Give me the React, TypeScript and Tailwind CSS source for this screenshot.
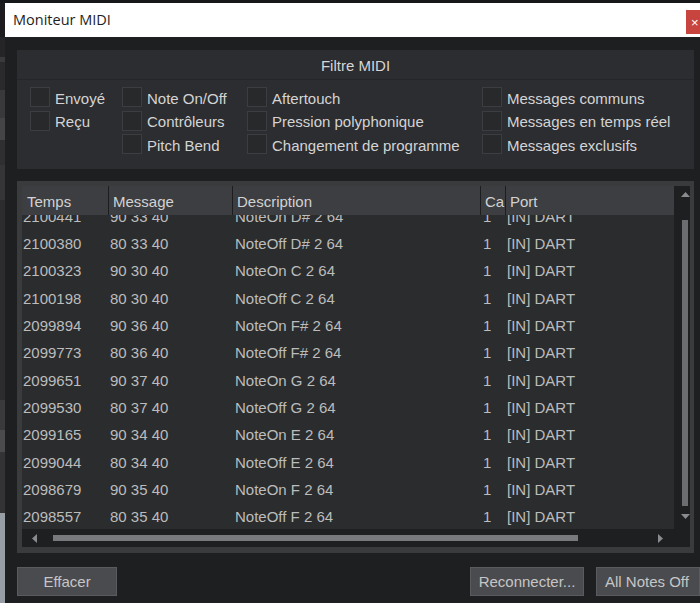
import React from 'react';

const rows = [
  ['2100441', '90 33 40', 'NoteOn D# 2 64'],
  ['2100380', '80 33 40', 'NoteOff D# 2 64'],
  ['2100323', '90 30 40', 'NoteOn C 2 64'],
  ['2100198', '80 30 40', 'NoteOff C 2 64'],
  ['2099894', '90 36 40', 'NoteOn F# 2 64'],
  ['2099773', '80 36 40', 'NoteOff F# 2 64'],
  ['2099651', '90 37 40', 'NoteOn G 2 64'],
  ['2099530', '80 37 40', 'NoteOff G 2 64'],
  ['2099165', '90 34 40', 'NoteOn E 2 64'],
  ['2099044', '80 34 40', 'NoteOff E 2 64'],
  ['2098679', '90 35 40', 'NoteOn F 2 64'],
  ['2098557', '80 35 40', 'NoteOff F 2 64'],
];

const filterCols = [
  { w: 'w-[92px]', items: ['Envoyé', 'Reçu'] },
  { w: 'w-[125px]', items: ['Note On/Off', 'Contrôleurs', 'Pitch Bend'] },
  { w: 'w-[235px]', items: ['Aftertouch', 'Pression polyphonique', 'Changement de programme'] },
  { w: 'flex-1', items: ['Messages communs', 'Messages en temps réel', 'Messages exclusifs'] },
];

const Check = ({ label }: { label: string }) => (
  <div className="flex items-center h-[20px]">
    <div className="w-[20px] h-[20px] shrink-0 bg-[#28292b] border border-[#3c3d40]" />
    <span className="ml-[5px] pt-[2px] text-[15px] text-[#d4d4d4] whitespace-nowrap leading-none">{label}</span>
  </div>
);

const Tri = ({ dir }: { dir: 'up' | 'down' | 'left' | 'right' }) => {
  const pts = {
    up: '0,5 4.5,0 9,5',
    down: '0,0 9,0 4.5,5',
    left: '5,0 5,9 0,4.5',
    right: '0,0 0,9 5,4.5',
  }[dir];
  const vert = dir === 'up' || dir === 'down';
  return (
    <svg width={vert ? 9 : 5} height={vert ? 5 : 9} className="shrink-0">
      <polygon points={pts} fill="#8a8b8e" />
    </svg>
  );
};

const App = () => {
  return (
    <div className="w-[700px] h-[603px] overflow-hidden flex flex-col bg-[#1e1f21] font-['Liberation_Sans',Arial,sans-serif]">
      <div className="h-[3px] bg-[#17181a]" />
      <div className="flex flex-1 min-h-0">
        {/* app behind the dialog */}
        <div className="w-[5px] flex flex-col">
          <div className="h-[34px] bg-[#1c1c1e]" />
          <div className="h-[20px] bg-[#252527]" />
          <div className="h-[5px] bg-[#3a3a3c]" />
          <div className="h-[28px] bg-[#2a2a2c]" />
          <div className="h-[28px] bg-[#39393b]" />
          <div className="h-[22px] bg-[#444446]" />
          <div className="h-[25px] bg-[#2f2f31]" />
          <div className="h-[35px] bg-[#353537]" />
          <div className="h-[200px] bg-[#2c2c2e]" />
          <div className="h-[30px] bg-[#3a3a3c]" />
          <div className="h-[22px] bg-[#4b4b4d]" />
          <div className="h-[61px] bg-[#333335]" />
          <div className="flex-1 bg-[#979ea6]" />
        </div>

        <div className="flex-1 flex flex-col min-w-0">
          {/* title bar */}
          <div className="h-[34px] bg-white flex justify-between">
            <span className="pl-[8px] self-center text-[14.5px] text-[#1e1e1e] font-['Open_Sans',sans-serif]">Moniteur MIDI</span>
            <div className="w-[14px] h-[24px] mt-[7px] bg-[#c8453f] overflow-hidden flex items-center pl-[5px] text-white text-[13px] leading-none">×</div>
          </div>

          <div className="flex-1 flex flex-col pl-[12px] pt-[13px] min-h-0">
            {/* filter panel */}
            <div className="w-[677px] h-[119px] bg-[#2c2d30] flex flex-col">
              <div className="h-[30px] pt-[3px] flex items-center justify-center border-b border-[#252628] text-[15px] text-[#d6d6d6]">
                Filtre MIDI
              </div>
              <div className="flex pl-[13px] pt-[7px]">
                {filterCols.map((c, i) => (
                  <div key={i} className={`${c.w} flex flex-col gap-[3.5px]`}>
                    {c.items.map((l) => (
                      <Check key={l} label={l} />
                    ))}
                  </div>
                ))}
              </div>
            </div>

            {/* table */}
            <div className="mt-[12px] w-[677px] h-[372px] bg-[#3a3b3d] pt-[5px] pl-[5px] pr-[4px] pb-[6px] flex">
              <div className="flex-1 flex flex-col bg-[#1e1f21] min-w-0">
                <div className="flex flex-1 min-h-0">
                  <div className="flex-1 flex flex-col min-w-0">
                    <div className="h-[29px] shrink-0 bg-[#3d3e41] flex text-[15px] text-[#d2d2d2] relative z-10">
                      <div className="w-[86px] pl-[5px] pt-[4px] flex items-center">Temps</div>
                      <div className="w-[124px] pl-[4px] pt-[4px] flex items-center border-l border-[#1c1d1f]">Message</div>
                      <div className="w-[248px] pl-[4px] pt-[4px] flex items-center border-l border-[#1c1d1f]">Description</div>
                      <div className="w-[25px] pl-[4px] pt-[4px] flex items-center border-l border-[#1c1d1f] overflow-hidden whitespace-nowrap">Ca</div>
                      <div className="flex-1 pl-[4px] pt-[4px] flex items-center border-l border-[#1c1d1f]">Port</div>
                    </div>
                    <div className="flex-1 bg-[#2b2c2e] overflow-hidden">
                      <div className="mt-[-11.5px]">
                        {rows.map((r) => (
                          <div key={r[0]} className="h-[27.3px] flex items-center text-[15px] text-[#bcbcbc] whitespace-nowrap">
                            <div className="w-[86px] pl-[1px]">{r[0]}</div>
                            <div className="w-[124px] pl-[2px]">{r[1]}</div>
                            <div className="w-[248px] pl-[3px]">{r[2]}</div>
                            <div className="w-[25px] pl-[3px]">1</div>
                            <div className="flex-1 pl-[2px]">[IN] DART</div>
                          </div>
                        ))}
                      </div>
                    </div>
                  </div>
                  {/* vertical scrollbar */}
                  <div className="w-[16px] flex flex-col items-center pl-[6px]">
                    <div className="mt-[6px]"><Tri dir="up" /></div>
                    <div className="mt-[23px] w-[6px] h-[286px] bg-[#6c6d70]" />
                    <div className="mt-[8px]"><Tri dir="down" /></div>
                  </div>
                </div>
                {/* horizontal scrollbar */}
                <div className="h-[18px] shrink-0 flex items-center pl-[10px] pr-[27px]">
                  <Tri dir="left" />
                  <div className="ml-[16px] w-[525px] h-[6px] bg-[#78797c]" />
                  <div className="ml-auto"><Tri dir="right" /></div>
                </div>
              </div>
            </div>

            {/* buttons */}
            <div className="mt-[14px] flex items-start">
              <button className="w-[100px] h-[29px] pt-[2px] bg-[#4a4b4e] border border-[#5a5b5e] text-[15px] text-[#c6c6c6]">Effacer</button>
              <button className="ml-auto w-[114px] h-[29px] pt-[2px] bg-[#4a4b4e] border border-[#5a5b5e] text-[15px] text-[#c6c6c6] whitespace-nowrap">Reconnecter...</button>
              <button className="ml-[12px] w-[104px] shrink-0 h-[29px] pt-[2px] bg-[#4a4b4e] border border-[#5a5b5e] text-[15px] text-[#c6c6c6] whitespace-nowrap text-left pl-[8px]">All Notes Off</button>
            </div>
          </div>
        </div>
      </div>
    </div>
  );
};

export default App;
